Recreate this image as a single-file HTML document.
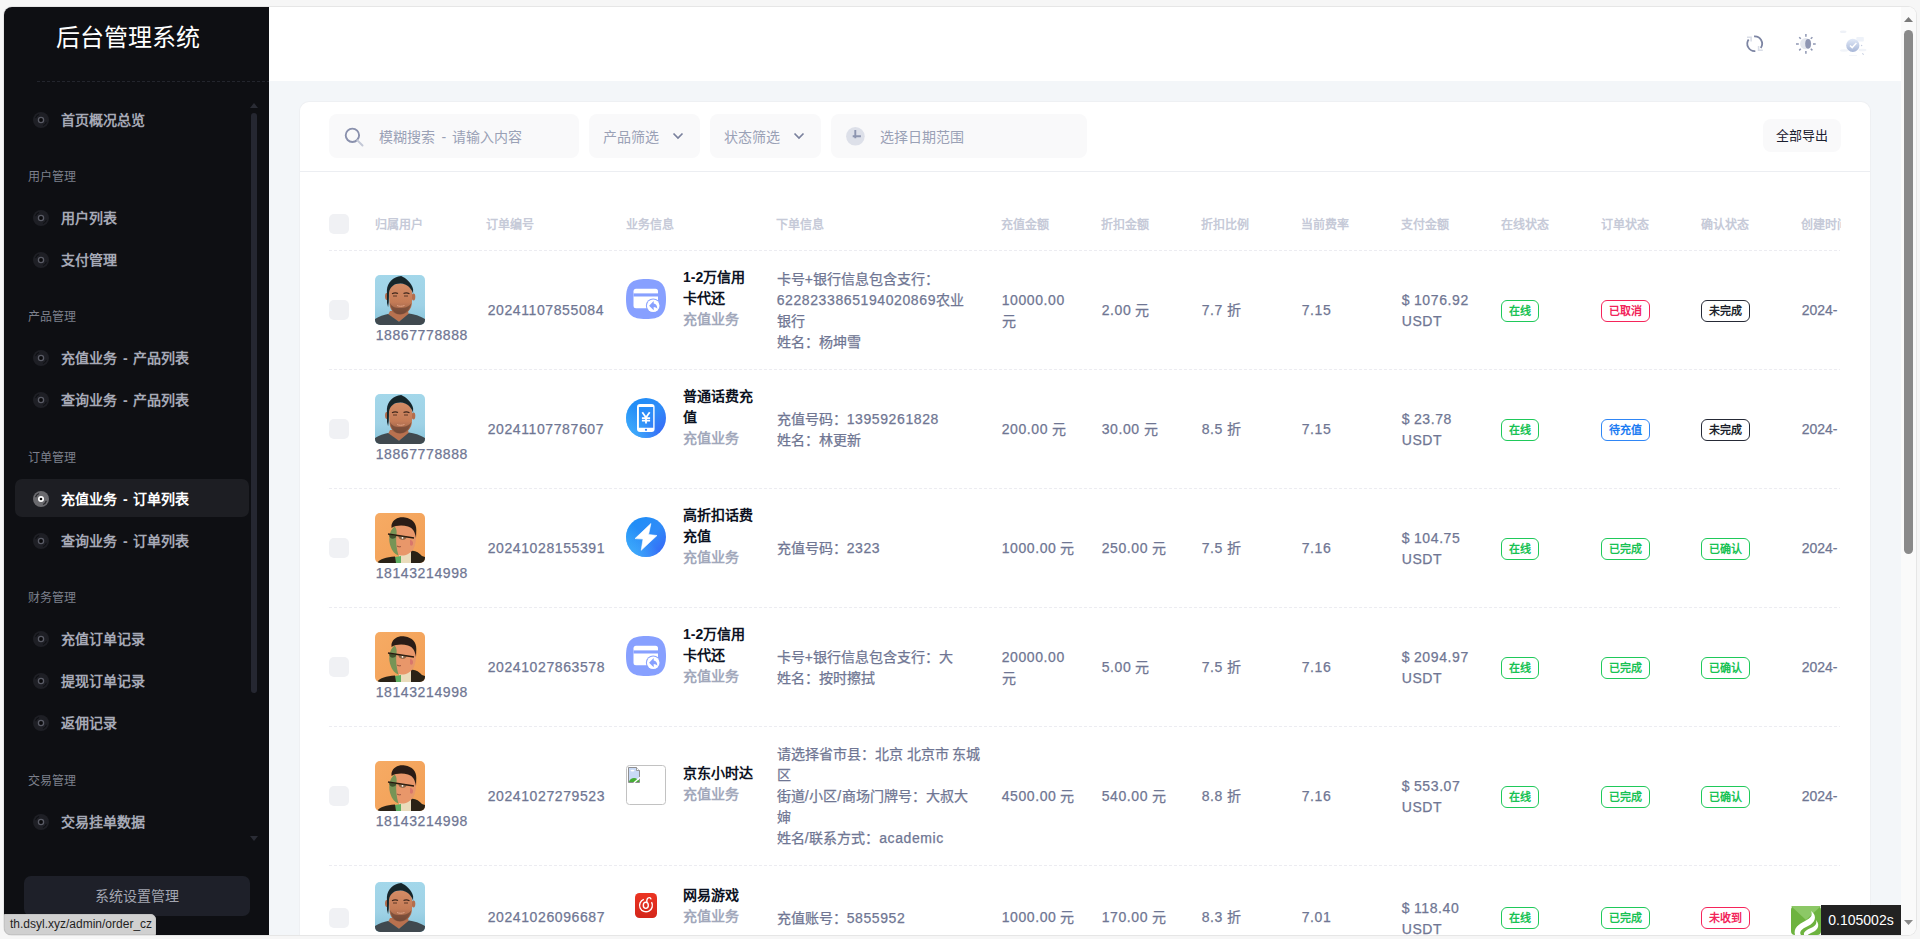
<!DOCTYPE html><html lang="zh-CN"><head><meta charset="utf-8"><title>后台管理系统</title><style>
*{box-sizing:border-box;margin:0;padding:0}
html,body{width:1920px;height:939px;overflow:hidden;background:#f6f6f6;font-family:"Liberation Sans",sans-serif}
.win{position:absolute;left:4px;top:7px;width:1912px;height:928px;border-radius:8px;overflow:hidden;background:#fff;box-shadow:0 0 0 1px #e6e6e6}
.in{position:absolute;left:-4px;top:-7px;width:1920px;height:939px}
.a{position:absolute;white-space:nowrap}
.side{position:absolute;left:4px;top:7px;width:265px;height:928px;background:#0e0f13}
.mi{position:absolute;left:61px;word-spacing:2px;font-size:14px;line-height:21px;font-weight:bold;color:#a6a9b6;white-space:nowrap}
.sec{position:absolute;left:28px;font-size:12px;line-height:20px;color:#7d808c;white-space:nowrap}
.ic{position:absolute;left:33px;width:16px;height:16px}
.hdr{position:absolute;left:269px;top:7px;width:1632px;height:74px;background:#fff}
.cnt{position:absolute;left:269px;top:81px;width:1632px;height:858px;background:#f3f6f9}
.card{position:absolute;left:300px;top:102px;width:1570px;height:900px;background:#fff;border-radius:9px;box-shadow:0 0 0 1px #eef0f3}
.inp{position:absolute;top:114px;height:44px;background:#f9f9fa;border-radius:8px}
.ph{position:absolute;word-spacing:2.5px;font-size:14px;line-height:21px;margin-top:1.5px;color:#9aa1b6;white-space:nowrap}
.th{position:absolute;top:213px;font-size:12px;line-height:20px;font-weight:bold;color:#c6cad8;white-space:nowrap}
.dash{position:absolute;left:329px;width:1511px;height:1px;background-image:linear-gradient(to right,#ececf1 60%,transparent 60%);background-size:5px 1px}
.t{position:absolute;font-size:14px;line-height:21px;color:#6f7693;white-space:nowrap;padding-left:0.7px;-webkit-text-stroke:0.25px #6f7693}
.n{letter-spacing:0.6px}
.tb{position:absolute;font-size:14px;line-height:21px;color:#0c1222;font-weight:bold;white-space:nowrap}
.ts{position:absolute;font-size:14px;line-height:21px;color:#a2a8bb;font-weight:bold;white-space:nowrap}
.cb{position:absolute;left:329px;width:20px;height:20px;border-radius:5px;background:#f0f1f4}
.bd{position:absolute;height:22px;border:1px solid;border-radius:6px;font-size:11px;line-height:20px;font-weight:bold;padding:0 7px;white-space:nowrap;background:#fff}
.g{color:#18c254;border-color:#1fc95a}
.r{color:#f2245a;border-color:#f5245a}
.k{color:#1b1f2b;border-color:#262a36}
.bl{color:#1d7cf2;border-color:#2f86f6}
</style></head><body>
<div class="win"><div class="in">
<div class="side"></div>
<div class="a" style="left:56px;top:23px;font-size:24px;line-height:30px;color:#fff">后台管理系统</div>
<div class="a" style="left:37px;top:81px;width:232px;height:1px;background-image:linear-gradient(to right,#23252d 60%,transparent 60%);background-size:5px 1px"></div>
<div class="a" style="left:15px;top:479px;width:234px;height:38px;border-radius:7px;background:#1d1e23"></div>
<svg class="ic" style="top:111.5px" viewBox="0 0 16 16"><circle cx="8" cy="8" r="8" fill="#1e1f25"/><path d="M2.6 6.2 A5.8 5.8 0 0 1 6 2.5" stroke="#0f1014" stroke-width="1.1" fill="none"/><path d="M13.4 9.8 A5.8 5.8 0 0 1 10 13.5" stroke="#0f1014" stroke-width="1.1" fill="none"/><circle cx="8" cy="8" r="2.6" stroke="#5a5c66" stroke-width="1.3" fill="#0b0b0e"/></svg>
<div class="mi" style="top:109.5px;color:#a6a9b6">首页概况总览</div>
<svg class="ic" style="top:209.5px" viewBox="0 0 16 16"><circle cx="8" cy="8" r="8" fill="#1e1f25"/><path d="M2.6 6.2 A5.8 5.8 0 0 1 6 2.5" stroke="#0f1014" stroke-width="1.1" fill="none"/><path d="M13.4 9.8 A5.8 5.8 0 0 1 10 13.5" stroke="#0f1014" stroke-width="1.1" fill="none"/><circle cx="8" cy="8" r="2.6" stroke="#5a5c66" stroke-width="1.3" fill="#0b0b0e"/></svg>
<div class="mi" style="top:207.5px;color:#a6a9b6">用户列表</div>
<svg class="ic" style="top:251.5px" viewBox="0 0 16 16"><circle cx="8" cy="8" r="8" fill="#1e1f25"/><path d="M2.6 6.2 A5.8 5.8 0 0 1 6 2.5" stroke="#0f1014" stroke-width="1.1" fill="none"/><path d="M13.4 9.8 A5.8 5.8 0 0 1 10 13.5" stroke="#0f1014" stroke-width="1.1" fill="none"/><circle cx="8" cy="8" r="2.6" stroke="#5a5c66" stroke-width="1.3" fill="#0b0b0e"/></svg>
<div class="mi" style="top:249.5px;color:#a6a9b6">支付管理</div>
<svg class="ic" style="top:349.5px" viewBox="0 0 16 16"><circle cx="8" cy="8" r="8" fill="#1e1f25"/><path d="M2.6 6.2 A5.8 5.8 0 0 1 6 2.5" stroke="#0f1014" stroke-width="1.1" fill="none"/><path d="M13.4 9.8 A5.8 5.8 0 0 1 10 13.5" stroke="#0f1014" stroke-width="1.1" fill="none"/><circle cx="8" cy="8" r="2.6" stroke="#5a5c66" stroke-width="1.3" fill="#0b0b0e"/></svg>
<div class="mi" style="top:347.5px;color:#a6a9b6">充值业务 - 产品列表</div>
<svg class="ic" style="top:391.5px" viewBox="0 0 16 16"><circle cx="8" cy="8" r="8" fill="#1e1f25"/><path d="M2.6 6.2 A5.8 5.8 0 0 1 6 2.5" stroke="#0f1014" stroke-width="1.1" fill="none"/><path d="M13.4 9.8 A5.8 5.8 0 0 1 10 13.5" stroke="#0f1014" stroke-width="1.1" fill="none"/><circle cx="8" cy="8" r="2.6" stroke="#5a5c66" stroke-width="1.3" fill="#0b0b0e"/></svg>
<div class="mi" style="top:389.5px;color:#a6a9b6">查询业务 - 产品列表</div>
<svg class="ic" style="top:490.5px" viewBox="0 0 16 16"><circle cx="8" cy="8" r="8" fill="#6a6a6e"/><path d="M2.6 6.2 A5.8 5.8 0 0 1 6 2.5" stroke="#2a2a2e" stroke-width="1.3" fill="none"/><path d="M13.4 9.8 A5.8 5.8 0 0 1 10 13.5" stroke="#2a2a2e" stroke-width="1.3" fill="none"/><circle cx="8" cy="8" r="3" fill="#fff"/><circle cx="8" cy="8" r="1.3" fill="#111"/></svg>
<div class="mi" style="top:488.5px;color:#ffffff">充值业务 - 订单列表</div>
<svg class="ic" style="top:532.5px" viewBox="0 0 16 16"><circle cx="8" cy="8" r="8" fill="#1e1f25"/><path d="M2.6 6.2 A5.8 5.8 0 0 1 6 2.5" stroke="#0f1014" stroke-width="1.1" fill="none"/><path d="M13.4 9.8 A5.8 5.8 0 0 1 10 13.5" stroke="#0f1014" stroke-width="1.1" fill="none"/><circle cx="8" cy="8" r="2.6" stroke="#5a5c66" stroke-width="1.3" fill="#0b0b0e"/></svg>
<div class="mi" style="top:530.5px;color:#a6a9b6">查询业务 - 订单列表</div>
<svg class="ic" style="top:630.5px" viewBox="0 0 16 16"><circle cx="8" cy="8" r="8" fill="#1e1f25"/><path d="M2.6 6.2 A5.8 5.8 0 0 1 6 2.5" stroke="#0f1014" stroke-width="1.1" fill="none"/><path d="M13.4 9.8 A5.8 5.8 0 0 1 10 13.5" stroke="#0f1014" stroke-width="1.1" fill="none"/><circle cx="8" cy="8" r="2.6" stroke="#5a5c66" stroke-width="1.3" fill="#0b0b0e"/></svg>
<div class="mi" style="top:628.5px;color:#a6a9b6">充值订单记录</div>
<svg class="ic" style="top:672.5px" viewBox="0 0 16 16"><circle cx="8" cy="8" r="8" fill="#1e1f25"/><path d="M2.6 6.2 A5.8 5.8 0 0 1 6 2.5" stroke="#0f1014" stroke-width="1.1" fill="none"/><path d="M13.4 9.8 A5.8 5.8 0 0 1 10 13.5" stroke="#0f1014" stroke-width="1.1" fill="none"/><circle cx="8" cy="8" r="2.6" stroke="#5a5c66" stroke-width="1.3" fill="#0b0b0e"/></svg>
<div class="mi" style="top:670.5px;color:#a6a9b6">提现订单记录</div>
<svg class="ic" style="top:714.5px" viewBox="0 0 16 16"><circle cx="8" cy="8" r="8" fill="#1e1f25"/><path d="M2.6 6.2 A5.8 5.8 0 0 1 6 2.5" stroke="#0f1014" stroke-width="1.1" fill="none"/><path d="M13.4 9.8 A5.8 5.8 0 0 1 10 13.5" stroke="#0f1014" stroke-width="1.1" fill="none"/><circle cx="8" cy="8" r="2.6" stroke="#5a5c66" stroke-width="1.3" fill="#0b0b0e"/></svg>
<div class="mi" style="top:712.5px;color:#a6a9b6">返佣记录</div>
<svg class="ic" style="top:813.5px" viewBox="0 0 16 16"><circle cx="8" cy="8" r="8" fill="#1e1f25"/><path d="M2.6 6.2 A5.8 5.8 0 0 1 6 2.5" stroke="#0f1014" stroke-width="1.1" fill="none"/><path d="M13.4 9.8 A5.8 5.8 0 0 1 10 13.5" stroke="#0f1014" stroke-width="1.1" fill="none"/><circle cx="8" cy="8" r="2.6" stroke="#5a5c66" stroke-width="1.3" fill="#0b0b0e"/></svg>
<div class="mi" style="top:811.5px;color:#a6a9b6">交易挂单数据</div>
<div class="sec" style="top:166.5px">用户管理</div>
<div class="sec" style="top:306.5px">产品管理</div>
<div class="sec" style="top:447.5px">订单管理</div>
<div class="sec" style="top:587.5px">财务管理</div>
<div class="sec" style="top:770.5px">交易管理</div>
<div class="a" style="left:251px;top:113px;width:6px;height:580px;border-radius:3px;background:#252731"></div>
<svg class="a" style="left:250px;top:103px" width="8" height="5" viewBox="0 0 8 5"><path d="M0 5 L4 0 L8 5Z" fill="#2a2c35"/></svg>
<svg class="a" style="left:250px;top:836px" width="8" height="5" viewBox="0 0 8 5"><path d="M0 0 L4 5 L8 0Z" fill="#2a2c35"/></svg>
<div class="a" style="left:24px;top:876px;width:226px;height:40px;border-radius:7px;background:#1e2029;color:#a3a6b1;font-size:14px;line-height:40px;text-align:center">系统设置管理</div>
<div class="hdr"></div>
<svg class="a" style="left:1742px;top:31px" width="26" height="26" viewBox="0 0 26 26"><path d="M12.05 5.33 A7.4 7.4 0 0 1 18.76 16.94" stroke="#7d85a3" stroke-width="1.8" fill="none"/><path d="M13.34 20.07 A7.4 7.4 0 0 1 6.64 8.46" stroke="#7d85a3" stroke-width="1.8" fill="none"/><path d="M16.6 15 V19.2 H20.8" stroke="#d9dde7" stroke-width="1.6" fill="none"/><path d="M5 6.2 H9.1 V10.5" stroke="#d9dde7" stroke-width="1.6" fill="none"/></svg>
<svg class="a" style="left:1793px;top:31px" width="26" height="26" viewBox="0 0 26 26"><circle cx="12.7" cy="12.7" r="5.6" fill="#e4e7ee"/><ellipse cx="15.1" cy="12.85" rx="2.9" ry="4.85" fill="#8e96b2"/><g stroke="#8e96b2" stroke-width="1.5" stroke-linecap="butt"><path d="M12.9 3V5.8"/><path d="M12.9 20V22.7"/><path d="M3 12.9H5.8"/><path d="M20 12.9H22.7"/><path d="M6.2 6.2L7.8 7.8"/><path d="M19.4 6.2L17.8 7.8"/><path d="M6.2 19.4L7.8 17.8"/><path d="M19.4 19.4L17.8 17.8"/></g></svg>
<svg class="a" style="left:1836px;top:28px" width="34" height="34" viewBox="0 0 34 34"><defs><linearGradient id="ag" x1="0" y1="0" x2="0" y2="1"><stop offset="0" stop-color="#e2eaf8"/><stop offset="1" stop-color="#a7b6d7"/></linearGradient></defs><ellipse cx="7.2" cy="3.8" rx="3.3" ry="1.3" fill="#eef1f7"/><rect x="20.3" y="9" width="7.5" height="4.5" rx="0.8" fill="#eef2f9"/><ellipse cx="8" cy="22.5" rx="4" ry="1.2" fill="#f1f4f9"/><ellipse cx="26.5" cy="22" rx="4" ry="1.3" fill="#f1f4f9"/><circle cx="25.6" cy="17.5" r="0.7" fill="#c5cde0"/><path d="M26.5 25 L27.5 27" stroke="#c9d1e2" stroke-width="1"/><rect x="13" y="27" width="8" height="0.8" fill="#f0f3f8"/><circle cx="16.8" cy="17.4" r="6.6" fill="url(#ag)"/><path d="M14 17.5 L16.2 19.6 L20.4 15.1" stroke="#fff" stroke-width="1.5" fill="none"/></svg>
<div class="cnt"></div>
<div class="card"></div>
<div class="inp" style="left:329px;width:250px"></div>
<svg class="a" style="left:344px;top:127px" width="21" height="21" viewBox="0 0 21 21"><circle cx="8.4" cy="8.3" r="6.7" stroke="#8a91ad" stroke-width="1.9" fill="none"/><path d="M13.4 13.4 L18.5 18.5" stroke="#c3c8d6" stroke-width="2" stroke-linecap="round"/></svg>
<div class="ph" style="left:379px;top:125px">模糊搜索 - 请输入内容</div>
<div class="inp" style="left:589px;width:111px"></div>
<div class="ph" style="left:603px;top:125px">产品筛选</div>
<svg class="a" style="left:672px;top:132px" width="12" height="8" viewBox="0 0 12 8"><path d="M1.5 1.5 L6 6 L10.5 1.5" stroke="#7a819d" stroke-width="1.7" fill="none"/></svg>
<div class="inp" style="left:710px;width:111px"></div>
<div class="ph" style="left:724px;top:125px">状态筛选</div>
<svg class="a" style="left:793px;top:132px" width="12" height="8" viewBox="0 0 12 8"><path d="M1.5 1.5 L6 6 L10.5 1.5" stroke="#7a819d" stroke-width="1.7" fill="none"/></svg>
<div class="inp" style="left:831px;width:256px"></div>
<svg class="a" style="left:846px;top:127px" width="19" height="19" viewBox="0 0 19 19"><circle cx="9.4" cy="9.3" r="9.3" fill="#dde0e9"/><path d="M9.3 3.1 V11.3 M6.7 9.3 H14.9" stroke="#8d95b0" stroke-width="1.9" fill="none"/></svg>
<div class="ph" style="left:880px;top:125px">选择日期范围</div>
<div class="a" style="left:1763px;top:119px;width:78px;height:33px;border-radius:8px;background:#f9f9fa;font-size:13px;line-height:33px;text-align:center;color:#1b2030">全部导出</div>
<div class="a" style="left:300px;top:171px;width:1570px;height:1px;background:#eceef2"></div>
<div class="cb" style="top:214px"></div>
<div class="a" style="left:300px;top:190px;width:1541px;height:700px;overflow:hidden">
<div class="th" style="left:75px;top:24.5px">归属用户</div>
<div class="th" style="left:186px;top:24.5px">订单编号</div>
<div class="th" style="left:326px;top:24.5px">业务信息</div>
<div class="th" style="left:476px;top:24.5px">下单信息</div>
<div class="th" style="left:701px;top:24.5px">充值金额</div>
<div class="th" style="left:801px;top:24.5px">折扣金额</div>
<div class="th" style="left:901px;top:24.5px">折扣比例</div>
<div class="th" style="left:1001px;top:24.5px">当前费率</div>
<div class="th" style="left:1101px;top:24.5px">支付金额</div>
<div class="th" style="left:1201px;top:24.5px">在线状态</div>
<div class="th" style="left:1301px;top:24.5px">订单状态</div>
<div class="th" style="left:1401px;top:24.5px">确认状态</div>
<div class="th" style="left:1501px;top:24.5px">创建时间</div>
</div>
<div class="dash" style="top:250px"></div>
<div class="dash" style="top:369px"></div>
<div class="dash" style="top:488px"></div>
<div class="dash" style="top:607px"></div>
<div class="dash" style="top:726px"></div>
<div class="dash" style="top:865px"></div>
<div class="cb" style="top:300.0px"></div>
<svg class="a" style="left:375px;top:275px" width="50" height="50" viewBox="0 0 50 50"><defs><linearGradient id="sa275" x1="0" y1="0" x2="0" y2="1"><stop offset="0" stop-color="#a3d7ea"/><stop offset="0.6" stop-color="#9fd2e6"/><stop offset="1" stop-color="#86c3d9"/></linearGradient><linearGradient id="fa275" x1="0" y1="0" x2="0" y2="1"><stop offset="0" stop-color="#d38c66"/><stop offset="0.6" stop-color="#c47b56"/><stop offset="1" stop-color="#8e5a44"/></linearGradient><clipPath id="ca275"><rect width="50" height="50" rx="5"/></clipPath><filter id="bl275"><feGaussianBlur stdDeviation="0.35"/></filter></defs><g clip-path="url(#ca275)"><rect width="50" height="50" fill="url(#sa275)"/><g filter="url(#bl275)"><path d="M15 36 L33 36 L34 40 L24 47 L13 40Z" fill="#b8714f"/><path d="M0 44 C4 41.5 9 39.5 13 39 L24 46.8 L34 38.5 C39 39 45 41 50 44 L50 50 L0 50Z" fill="#3f4a4f"/><ellipse cx="11.8" cy="21.5" rx="1.8" ry="3.4" fill="#b46e4e"/><ellipse cx="38.5" cy="22" rx="1.8" ry="3.4" fill="#b46e4e"/><path d="M13.8 18 C13.8 12 18.5 8.6 25.6 8.6 C32.5 8.6 37 12 37 18 L37 27 C37 34 32 39.5 25 39.5 C18 39.5 14.5 34 14.3 27Z" fill="url(#fa275)"/><path d="M15 28 C16 35 20 39.3 25 39.3 C30 39.3 35 35 36.5 28 C34 32 30 33 25 33 C20 33 17 32 15 28Z" fill="#5b3a2c" opacity="0.55"/><path d="M17 18.7 C19 17.8 21.5 17.8 23 18.6 M28.5 18.6 C30 17.8 32.5 17.8 34.5 18.8" stroke="#3e261c" stroke-width="1.1" fill="none"/><path d="M18 21 h4 M29 21 h4" stroke="#5a3526" stroke-width="1" fill="none"/><path d="M22 30.5 C24 31.5 27 31.5 29.5 30.5" stroke="#e0a285" stroke-width="1" fill="none"/><path d="M11.9 15 C12.5 7 18 2 26.2 0.9 C31 3 37 8 38.1 14.3 L38.1 19 C37 14 32 8.6 25.6 8.6 C19 8.6 15 12 14 17.5 L13.8 27 L13.1 32.2 L12 28Z" fill="#19262c"/></g></g></svg>
<div class="t" style="left:375px;top:325.0px"><span class="n">18867778888</span></div>
<div class="t" style="left:487px;top:299.5px"><span class="n">20241107855084</span></div>
<svg class="a" style="left:626px;top:279px" width="40" height="40" viewBox="0 0 40 40"><path d="M20 0 C34 0 40 4 40 20 C40 36 34 40 20 40 C6 40 0 36 0 20 C0 4 6 0 20 0Z" fill="#87a0ff"/><rect x="7.5" y="9.8" width="24.5" height="19.4" rx="2.5" fill="#fff"/><rect x="7.5" y="14.4" width="24.5" height="3.1" fill="#87a0ff"/><circle cx="27.2" cy="26.7" r="7.3" fill="#87a0ff"/><circle cx="27.2" cy="26.7" r="6.3" fill="#fff"/><path d="M23.1 26.7 L27.7 22.1 L27.7 24.6 C30 24.8 31.2 26.5 31.3 29.8 C30.4 28.6 29.3 28.2 27.7 28.1 L27.7 31.3Z" fill="#87a0ff"/></svg>
<div class="tb" style="left:683px;top:266.5px">1-2万信用</div>
<div class="tb" style="left:683px;top:287.5px">卡代还</div>
<div class="ts" style="left:683px;top:308.5px">充值业务</div>
<div class="t" style="left:776px;top:268.5px">卡号<span class="n">+</span>银行信息包含支行：</div><div class="t" style="left:776px;top:289.5px"><span class="n">6228233865194020869</span>农业</div><div class="t" style="left:776px;top:310.5px">银行</div><div class="t" style="left:776px;top:331.5px">姓名：杨坤雪</div>
<div class="t" style="left:1001px;top:289.5px"><span class="n">10000.00</span></div><div class="t" style="left:1001px;top:310.5px">元</div>
<div class="t" style="left:1101px;top:299.5px"><span class="n">2.00</span> 元</div>
<div class="t" style="left:1201px;top:299.5px"><span class="n">7.7</span> 折</div>
<div class="t" style="left:1301px;top:299.5px"><span class="n">7.15</span></div>
<div class="t" style="left:1401px;top:290.0px"><span class="n">$</span> <span class="n">1076.92</span></div><div class="t" style="left:1401px;top:311.0px"><span class="n">USDT</span></div>
<div class="bd g" style="left:1501px;top:299.5px">在线</div>
<div class="bd r" style="left:1601px;top:299.5px">已取消</div>
<div class="bd k" style="left:1701px;top:299.5px">未完成</div>
<div class="a" style="left:1801px;top:299.5px;width:40px;height:21px;overflow:hidden"><div class="t" style="left:0;top:0">2024-</div></div>
<div class="cb" style="top:419.0px"></div>
<svg class="a" style="left:375px;top:394px" width="50" height="50" viewBox="0 0 50 50"><defs><linearGradient id="sa394" x1="0" y1="0" x2="0" y2="1"><stop offset="0" stop-color="#a3d7ea"/><stop offset="0.6" stop-color="#9fd2e6"/><stop offset="1" stop-color="#86c3d9"/></linearGradient><linearGradient id="fa394" x1="0" y1="0" x2="0" y2="1"><stop offset="0" stop-color="#d38c66"/><stop offset="0.6" stop-color="#c47b56"/><stop offset="1" stop-color="#8e5a44"/></linearGradient><clipPath id="ca394"><rect width="50" height="50" rx="5"/></clipPath><filter id="bl394"><feGaussianBlur stdDeviation="0.35"/></filter></defs><g clip-path="url(#ca394)"><rect width="50" height="50" fill="url(#sa394)"/><g filter="url(#bl394)"><path d="M15 36 L33 36 L34 40 L24 47 L13 40Z" fill="#b8714f"/><path d="M0 44 C4 41.5 9 39.5 13 39 L24 46.8 L34 38.5 C39 39 45 41 50 44 L50 50 L0 50Z" fill="#3f4a4f"/><ellipse cx="11.8" cy="21.5" rx="1.8" ry="3.4" fill="#b46e4e"/><ellipse cx="38.5" cy="22" rx="1.8" ry="3.4" fill="#b46e4e"/><path d="M13.8 18 C13.8 12 18.5 8.6 25.6 8.6 C32.5 8.6 37 12 37 18 L37 27 C37 34 32 39.5 25 39.5 C18 39.5 14.5 34 14.3 27Z" fill="url(#fa394)"/><path d="M15 28 C16 35 20 39.3 25 39.3 C30 39.3 35 35 36.5 28 C34 32 30 33 25 33 C20 33 17 32 15 28Z" fill="#5b3a2c" opacity="0.55"/><path d="M17 18.7 C19 17.8 21.5 17.8 23 18.6 M28.5 18.6 C30 17.8 32.5 17.8 34.5 18.8" stroke="#3e261c" stroke-width="1.1" fill="none"/><path d="M18 21 h4 M29 21 h4" stroke="#5a3526" stroke-width="1" fill="none"/><path d="M22 30.5 C24 31.5 27 31.5 29.5 30.5" stroke="#e0a285" stroke-width="1" fill="none"/><path d="M11.9 15 C12.5 7 18 2 26.2 0.9 C31 3 37 8 38.1 14.3 L38.1 19 C37 14 32 8.6 25.6 8.6 C19 8.6 15 12 14 17.5 L13.8 27 L13.1 32.2 L12 28Z" fill="#19262c"/></g></g></svg>
<div class="t" style="left:375px;top:444.0px"><span class="n">18867778888</span></div>
<div class="t" style="left:487px;top:418.5px"><span class="n">20241107787607</span></div>
<svg class="a" style="left:626px;top:398px" width="40" height="40" viewBox="0 0 40 40"><defs><linearGradient id="ph398" x1="0" y1="0" x2="1" y2="1"><stop offset="0" stop-color="#1a8ef6"/><stop offset="0.55" stop-color="#2f8cf8"/><stop offset="1" stop-color="#3a5ff6"/></linearGradient><linearGradient id="ph398b" x1="0" y1="1" x2="1" y2="0"><stop offset="0" stop-color="#45b8fc" stop-opacity="0.9"/><stop offset="0.5" stop-color="#45b8fc" stop-opacity="0"/></linearGradient></defs><circle cx="20" cy="20" r="20" fill="url(#ph398)"/><circle cx="20" cy="20" r="20" fill="url(#ph398b)"/><path d="M14 6 H25.6 A3 3 0 0 1 28.6 9 V31 A3 3 0 0 1 25.6 34 H14 A3 3 0 0 1 11 31 V9 A3 3 0 0 1 14 6Z M12.9 9 V29.7 H27.2 V9Z" fill="#fff" fill-rule="evenodd"/><circle cx="20" cy="31.8" r="1.1" fill="#2f7ef7"/><path d="M16.3 14.2 L20 19.5 L23.7 14.2 M20 19.5 V25.6 M15.9 20.2 H24.1 M15.9 22.7 H24.1" stroke="#fff" stroke-width="1.8" fill="none"/></svg>
<div class="tb" style="left:683px;top:385.5px">普通话费充</div>
<div class="tb" style="left:683px;top:406.5px">值</div>
<div class="ts" style="left:683px;top:427.5px">充值业务</div>
<div class="t" style="left:776px;top:408.5px">充值号码：<span class="n">13959261828</span></div><div class="t" style="left:776px;top:429.5px">姓名：林更新</div>
<div class="t" style="left:1001px;top:418.5px"><span class="n">200.00</span> 元</div>
<div class="t" style="left:1101px;top:418.5px"><span class="n">30.00</span> 元</div>
<div class="t" style="left:1201px;top:418.5px"><span class="n">8.5</span> 折</div>
<div class="t" style="left:1301px;top:418.5px"><span class="n">7.15</span></div>
<div class="t" style="left:1401px;top:409.0px"><span class="n">$</span> <span class="n">23.78</span></div><div class="t" style="left:1401px;top:430.0px"><span class="n">USDT</span></div>
<div class="bd g" style="left:1501px;top:418.5px">在线</div>
<div class="bd bl" style="left:1601px;top:418.5px">待充值</div>
<div class="bd k" style="left:1701px;top:418.5px">未完成</div>
<div class="a" style="left:1801px;top:418.5px;width:40px;height:21px;overflow:hidden"><div class="t" style="left:0;top:0">2024-</div></div>
<div class="cb" style="top:538.0px"></div>
<svg class="a" style="left:375px;top:513px" width="50" height="50" viewBox="0 0 50 50"><defs><linearGradient id="sb513" x1="0" y1="0" x2="1" y2="1"><stop offset="0" stop-color="#f6ab64"/><stop offset="1" stop-color="#f29f56"/></linearGradient><clipPath id="cb513"><rect width="50" height="50" rx="5"/></clipPath><filter id="bb513"><feGaussianBlur stdDeviation="0.4"/></filter></defs><g clip-path="url(#cb513)"><rect width="50" height="50" fill="url(#sb513)"/><g filter="url(#bb513)"><path d="M24 40 L36 38 L37 50 L24 50Z" fill="#eadcbc"/><path d="M20 44 L26 43 L26 50 L20 50Z" fill="#5fae62"/><path d="M2 50 C5 46 11 44 20 43.5 L21 50Z" fill="#2a2316"/><path d="M36 38 C40 37 44 40 47 43 L50 44 L50 50 L36 50Z" fill="#2a2316"/><path d="M20 13 C27 10 37 11 40 17 C42 23 41 31 38.5 36 C35 41 30 43 26 42.5 C20 42 16 36 14.5 29 C13.8 22 16 16 20 13Z" fill="#e8976a"/><path d="M19.5 13.5 C15.5 17 13.8 22 14.5 29 C15.5 36 19 41 23.5 42.5 C21.5 36 20.5 28 21.5 22 C22 18 21.5 15.5 19.5 13.5Z" fill="#5a9353" opacity="0.8"/><path d="M35 27 C37 27 38.5 29 38 31 C37.5 33 36 33 35 32Z" fill="#d46f6a" opacity="0.8"/><path d="M16.5 12 C18 6 24 3.5 30 4.5 C37 5.5 41.5 10 41.3 17 L41 25 C40 19 38 15 33 13.5 C28 12 21 12 16.5 15Z" fill="#2b1d13"/><path d="M13 21 L39 25" stroke="#2a1a10" stroke-width="1.6"/><path d="M14 21.5 C14 26 19 27 21 24 L21 22.5Z" fill="#2f3b22" opacity="0.75"/><path d="M23.5 22.8 C23 27 30 28.5 31.5 24.5 L31.5 23.8Z" fill="#3a3a25" opacity="0.55"/><circle cx="27.5" cy="24.8" r="0.9" fill="#fff"/><path d="M22 33 C23.5 34 25 34 26 33.5" stroke="#8a4a36" stroke-width="0.9" fill="none"/></g></g></svg>
<div class="t" style="left:375px;top:563.0px"><span class="n">18143214998</span></div>
<div class="t" style="left:487px;top:537.5px"><span class="n">20241028155391</span></div>
<svg class="a" style="left:626px;top:517px" width="40" height="40" viewBox="0 0 40 40"><defs><linearGradient id="bo517" x1="0" y1="0" x2="1" y2="1"><stop offset="0" stop-color="#1a8ef6"/><stop offset="0.55" stop-color="#2f8cf8"/><stop offset="1" stop-color="#3a5ff6"/></linearGradient><linearGradient id="bo517b" x1="0" y1="1" x2="1" y2="0"><stop offset="0" stop-color="#45b8fc" stop-opacity="0.9"/><stop offset="0.5" stop-color="#45b8fc" stop-opacity="0"/></linearGradient></defs><circle cx="20" cy="20" r="20" fill="url(#bo517)"/><circle cx="20" cy="20" r="20" fill="url(#bo517b)"/><path d="M24.9 6.5 L9 21.6 L17 22.1 L15.2 33.3 L31 18.5 L22.6 17.5Z" fill="#fff" stroke="#fff" stroke-width="0.6" stroke-linejoin="round"/></svg>
<div class="tb" style="left:683px;top:504.5px">高折扣话费</div>
<div class="tb" style="left:683px;top:525.5px">充值</div>
<div class="ts" style="left:683px;top:546.5px">充值业务</div>
<div class="t" style="left:776px;top:538.0px">充值号码：<span class="n">2323</span></div>
<div class="t" style="left:1001px;top:537.5px"><span class="n">1000.00</span> 元</div>
<div class="t" style="left:1101px;top:537.5px"><span class="n">250.00</span> 元</div>
<div class="t" style="left:1201px;top:537.5px"><span class="n">7.5</span> 折</div>
<div class="t" style="left:1301px;top:537.5px"><span class="n">7.16</span></div>
<div class="t" style="left:1401px;top:528.0px"><span class="n">$</span> <span class="n">104.75</span></div><div class="t" style="left:1401px;top:549.0px"><span class="n">USDT</span></div>
<div class="bd g" style="left:1501px;top:537.5px">在线</div>
<div class="bd g" style="left:1601px;top:537.5px">已完成</div>
<div class="bd g" style="left:1701px;top:537.5px">已确认</div>
<div class="a" style="left:1801px;top:537.5px;width:40px;height:21px;overflow:hidden"><div class="t" style="left:0;top:0">2024-</div></div>
<div class="cb" style="top:657.0px"></div>
<svg class="a" style="left:375px;top:632px" width="50" height="50" viewBox="0 0 50 50"><defs><linearGradient id="sb632" x1="0" y1="0" x2="1" y2="1"><stop offset="0" stop-color="#f6ab64"/><stop offset="1" stop-color="#f29f56"/></linearGradient><clipPath id="cb632"><rect width="50" height="50" rx="5"/></clipPath><filter id="bb632"><feGaussianBlur stdDeviation="0.4"/></filter></defs><g clip-path="url(#cb632)"><rect width="50" height="50" fill="url(#sb632)"/><g filter="url(#bb632)"><path d="M24 40 L36 38 L37 50 L24 50Z" fill="#eadcbc"/><path d="M20 44 L26 43 L26 50 L20 50Z" fill="#5fae62"/><path d="M2 50 C5 46 11 44 20 43.5 L21 50Z" fill="#2a2316"/><path d="M36 38 C40 37 44 40 47 43 L50 44 L50 50 L36 50Z" fill="#2a2316"/><path d="M20 13 C27 10 37 11 40 17 C42 23 41 31 38.5 36 C35 41 30 43 26 42.5 C20 42 16 36 14.5 29 C13.8 22 16 16 20 13Z" fill="#e8976a"/><path d="M19.5 13.5 C15.5 17 13.8 22 14.5 29 C15.5 36 19 41 23.5 42.5 C21.5 36 20.5 28 21.5 22 C22 18 21.5 15.5 19.5 13.5Z" fill="#5a9353" opacity="0.8"/><path d="M35 27 C37 27 38.5 29 38 31 C37.5 33 36 33 35 32Z" fill="#d46f6a" opacity="0.8"/><path d="M16.5 12 C18 6 24 3.5 30 4.5 C37 5.5 41.5 10 41.3 17 L41 25 C40 19 38 15 33 13.5 C28 12 21 12 16.5 15Z" fill="#2b1d13"/><path d="M13 21 L39 25" stroke="#2a1a10" stroke-width="1.6"/><path d="M14 21.5 C14 26 19 27 21 24 L21 22.5Z" fill="#2f3b22" opacity="0.75"/><path d="M23.5 22.8 C23 27 30 28.5 31.5 24.5 L31.5 23.8Z" fill="#3a3a25" opacity="0.55"/><circle cx="27.5" cy="24.8" r="0.9" fill="#fff"/><path d="M22 33 C23.5 34 25 34 26 33.5" stroke="#8a4a36" stroke-width="0.9" fill="none"/></g></g></svg>
<div class="t" style="left:375px;top:682.0px"><span class="n">18143214998</span></div>
<div class="t" style="left:487px;top:656.5px"><span class="n">20241027863578</span></div>
<svg class="a" style="left:626px;top:636px" width="40" height="40" viewBox="0 0 40 40"><path d="M20 0 C34 0 40 4 40 20 C40 36 34 40 20 40 C6 40 0 36 0 20 C0 4 6 0 20 0Z" fill="#87a0ff"/><rect x="7.5" y="9.8" width="24.5" height="19.4" rx="2.5" fill="#fff"/><rect x="7.5" y="14.4" width="24.5" height="3.1" fill="#87a0ff"/><circle cx="27.2" cy="26.7" r="7.3" fill="#87a0ff"/><circle cx="27.2" cy="26.7" r="6.3" fill="#fff"/><path d="M23.1 26.7 L27.7 22.1 L27.7 24.6 C30 24.8 31.2 26.5 31.3 29.8 C30.4 28.6 29.3 28.2 27.7 28.1 L27.7 31.3Z" fill="#87a0ff"/></svg>
<div class="tb" style="left:683px;top:623.5px">1-2万信用</div>
<div class="tb" style="left:683px;top:644.5px">卡代还</div>
<div class="ts" style="left:683px;top:665.5px">充值业务</div>
<div class="t" style="left:776px;top:646.5px">卡号<span class="n">+</span>银行信息包含支行：大</div><div class="t" style="left:776px;top:667.5px">姓名：按时擦拭</div>
<div class="t" style="left:1001px;top:646.5px"><span class="n">20000.00</span></div><div class="t" style="left:1001px;top:667.5px">元</div>
<div class="t" style="left:1101px;top:656.5px"><span class="n">5.00</span> 元</div>
<div class="t" style="left:1201px;top:656.5px"><span class="n">7.5</span> 折</div>
<div class="t" style="left:1301px;top:656.5px"><span class="n">7.16</span></div>
<div class="t" style="left:1401px;top:647.0px"><span class="n">$</span> <span class="n">2094.97</span></div><div class="t" style="left:1401px;top:668.0px"><span class="n">USDT</span></div>
<div class="bd g" style="left:1501px;top:656.5px">在线</div>
<div class="bd g" style="left:1601px;top:656.5px">已完成</div>
<div class="bd g" style="left:1701px;top:656.5px">已确认</div>
<div class="a" style="left:1801px;top:656.5px;width:40px;height:21px;overflow:hidden"><div class="t" style="left:0;top:0">2024-</div></div>
<div class="cb" style="top:786.0px"></div>
<svg class="a" style="left:375px;top:761px" width="50" height="50" viewBox="0 0 50 50"><defs><linearGradient id="sb761" x1="0" y1="0" x2="1" y2="1"><stop offset="0" stop-color="#f6ab64"/><stop offset="1" stop-color="#f29f56"/></linearGradient><clipPath id="cb761"><rect width="50" height="50" rx="5"/></clipPath><filter id="bb761"><feGaussianBlur stdDeviation="0.4"/></filter></defs><g clip-path="url(#cb761)"><rect width="50" height="50" fill="url(#sb761)"/><g filter="url(#bb761)"><path d="M24 40 L36 38 L37 50 L24 50Z" fill="#eadcbc"/><path d="M20 44 L26 43 L26 50 L20 50Z" fill="#5fae62"/><path d="M2 50 C5 46 11 44 20 43.5 L21 50Z" fill="#2a2316"/><path d="M36 38 C40 37 44 40 47 43 L50 44 L50 50 L36 50Z" fill="#2a2316"/><path d="M20 13 C27 10 37 11 40 17 C42 23 41 31 38.5 36 C35 41 30 43 26 42.5 C20 42 16 36 14.5 29 C13.8 22 16 16 20 13Z" fill="#e8976a"/><path d="M19.5 13.5 C15.5 17 13.8 22 14.5 29 C15.5 36 19 41 23.5 42.5 C21.5 36 20.5 28 21.5 22 C22 18 21.5 15.5 19.5 13.5Z" fill="#5a9353" opacity="0.8"/><path d="M35 27 C37 27 38.5 29 38 31 C37.5 33 36 33 35 32Z" fill="#d46f6a" opacity="0.8"/><path d="M16.5 12 C18 6 24 3.5 30 4.5 C37 5.5 41.5 10 41.3 17 L41 25 C40 19 38 15 33 13.5 C28 12 21 12 16.5 15Z" fill="#2b1d13"/><path d="M13 21 L39 25" stroke="#2a1a10" stroke-width="1.6"/><path d="M14 21.5 C14 26 19 27 21 24 L21 22.5Z" fill="#2f3b22" opacity="0.75"/><path d="M23.5 22.8 C23 27 30 28.5 31.5 24.5 L31.5 23.8Z" fill="#3a3a25" opacity="0.55"/><circle cx="27.5" cy="24.8" r="0.9" fill="#fff"/><path d="M22 33 C23.5 34 25 34 26 33.5" stroke="#8a4a36" stroke-width="0.9" fill="none"/></g></g></svg>
<div class="t" style="left:375px;top:811.0px"><span class="n">18143214998</span></div>
<div class="t" style="left:487px;top:785.5px"><span class="n">20241027279523</span></div>
<svg class="a" style="left:626px;top:765px" width="40" height="40" viewBox="0 0 40 40"><rect x="0.5" y="0.5" width="39" height="39" rx="3" fill="#fff" stroke="#c2c2c2"/><path d="M2.5 2.5 H10.5 L13.5 5.5 V17.5 H2.5Z" fill="#c9daf6" stroke="#858585" stroke-width="0.9"/><path d="M10.5 2.5 V5.5 H13.5" fill="#fff" stroke="#858585" stroke-width="0.8"/><ellipse cx="6.5" cy="5.6" rx="2" ry="0.9" fill="#fff"/><path d="M2.9 17.1 C4 13 8.5 12 11.5 14.2 L13.1 15.5 V17.1Z" fill="#46ad35"/><path d="M7.8 18 L14.2 12.2" stroke="#fff" stroke-width="1.3"/></svg>
<div class="tb" style="left:683px;top:763.0px">京东小时达</div>
<div class="ts" style="left:683px;top:784.0px">充值业务</div>
<div class="t" style="left:776px;top:744.0px">请选择省市县：北京 北京市 东城</div><div class="t" style="left:776px;top:765.0px">区</div><div class="t" style="left:776px;top:786.0px">街道<span class="n">/</span>小区<span class="n">/</span>商场门牌号：大叔大</div><div class="t" style="left:776px;top:807.0px">婶</div><div class="t" style="left:776px;top:828.0px">姓名<span class="n">/</span>联系方式：<span class="n">academic</span></div>
<div class="t" style="left:1001px;top:785.5px"><span class="n">4500.00</span> 元</div>
<div class="t" style="left:1101px;top:785.5px"><span class="n">540.00</span> 元</div>
<div class="t" style="left:1201px;top:785.5px"><span class="n">8.8</span> 折</div>
<div class="t" style="left:1301px;top:785.5px"><span class="n">7.16</span></div>
<div class="t" style="left:1401px;top:776.0px"><span class="n">$</span> <span class="n">553.07</span></div><div class="t" style="left:1401px;top:797.0px"><span class="n">USDT</span></div>
<div class="bd g" style="left:1501px;top:785.5px">在线</div>
<div class="bd g" style="left:1601px;top:785.5px">已完成</div>
<div class="bd g" style="left:1701px;top:785.5px">已确认</div>
<div class="a" style="left:1801px;top:785.5px;width:40px;height:21px;overflow:hidden"><div class="t" style="left:0;top:0">2024-</div></div>
<div class="cb" style="top:907.5px"></div>
<svg class="a" style="left:375px;top:882px" width="50" height="50" viewBox="0 0 50 50"><defs><linearGradient id="sa882" x1="0" y1="0" x2="0" y2="1"><stop offset="0" stop-color="#a3d7ea"/><stop offset="0.6" stop-color="#9fd2e6"/><stop offset="1" stop-color="#86c3d9"/></linearGradient><linearGradient id="fa882" x1="0" y1="0" x2="0" y2="1"><stop offset="0" stop-color="#d38c66"/><stop offset="0.6" stop-color="#c47b56"/><stop offset="1" stop-color="#8e5a44"/></linearGradient><clipPath id="ca882"><rect width="50" height="50" rx="5"/></clipPath><filter id="bl882"><feGaussianBlur stdDeviation="0.35"/></filter></defs><g clip-path="url(#ca882)"><rect width="50" height="50" fill="url(#sa882)"/><g filter="url(#bl882)"><path d="M15 36 L33 36 L34 40 L24 47 L13 40Z" fill="#b8714f"/><path d="M0 44 C4 41.5 9 39.5 13 39 L24 46.8 L34 38.5 C39 39 45 41 50 44 L50 50 L0 50Z" fill="#3f4a4f"/><ellipse cx="11.8" cy="21.5" rx="1.8" ry="3.4" fill="#b46e4e"/><ellipse cx="38.5" cy="22" rx="1.8" ry="3.4" fill="#b46e4e"/><path d="M13.8 18 C13.8 12 18.5 8.6 25.6 8.6 C32.5 8.6 37 12 37 18 L37 27 C37 34 32 39.5 25 39.5 C18 39.5 14.5 34 14.3 27Z" fill="url(#fa882)"/><path d="M15 28 C16 35 20 39.3 25 39.3 C30 39.3 35 35 36.5 28 C34 32 30 33 25 33 C20 33 17 32 15 28Z" fill="#5b3a2c" opacity="0.55"/><path d="M17 18.7 C19 17.8 21.5 17.8 23 18.6 M28.5 18.6 C30 17.8 32.5 17.8 34.5 18.8" stroke="#3e261c" stroke-width="1.1" fill="none"/><path d="M18 21 h4 M29 21 h4" stroke="#5a3526" stroke-width="1" fill="none"/><path d="M22 30.5 C24 31.5 27 31.5 29.5 30.5" stroke="#e0a285" stroke-width="1" fill="none"/><path d="M11.9 15 C12.5 7 18 2 26.2 0.9 C31 3 37 8 38.1 14.3 L38.1 19 C37 14 32 8.6 25.6 8.6 C19 8.6 15 12 14 17.5 L13.8 27 L13.1 32.2 L12 28Z" fill="#19262c"/></g></g></svg>
<div class="t" style="left:375px;top:932.5px"><span class="n">18867778888</span></div>
<div class="t" style="left:487px;top:907.0px"><span class="n">20241026096687</span></div>
<svg class="a" style="left:635px;top:893px" width="22" height="25" viewBox="0 0 22 25"><defs><linearGradient id="ne893" x1="0" y1="0" x2="0" y2="1"><stop offset="0" stop-color="#ec3422"/><stop offset="1" stop-color="#d3271b"/></linearGradient></defs><rect width="22" height="25" rx="4.5" fill="url(#ne893)"/><path d="M8.81 6.39 A6.4 6.4 0 1 0 16.54 9.2" stroke="#fff" stroke-width="1.4" fill="none"/><ellipse cx="10.8" cy="12.3" rx="2.5" ry="3.1" stroke="#fff" stroke-width="1.4" fill="none"/><path d="M11.8 9.4 C11.6 6.8 12.4 4.8 14.2 4.6 C15.2 4.5 15.9 5.3 15.8 6.4" stroke="#fff" stroke-width="1.4" fill="none"/></svg>
<div class="tb" style="left:683px;top:884.5px">网易游戏</div>
<div class="ts" style="left:683px;top:905.5px">充值业务</div>
<div class="t" style="left:776px;top:907.5px">充值账号：<span class="n">5855952</span></div>
<div class="t" style="left:1001px;top:907.0px"><span class="n">1000.00</span> 元</div>
<div class="t" style="left:1101px;top:907.0px"><span class="n">170.00</span> 元</div>
<div class="t" style="left:1201px;top:907.0px"><span class="n">8.3</span> 折</div>
<div class="t" style="left:1301px;top:907.0px"><span class="n">7.01</span></div>
<div class="t" style="left:1401px;top:897.5px"><span class="n">$</span> <span class="n">118.40</span></div><div class="t" style="left:1401px;top:918.5px"><span class="n">USDT</span></div>
<div class="bd g" style="left:1501px;top:907.0px">在线</div>
<div class="bd g" style="left:1601px;top:907.0px">已完成</div>
<div class="bd r" style="left:1701px;top:907.0px">未收到</div>
<div class="a" style="left:1801px;top:907.0px;width:40px;height:21px;overflow:hidden"><div class="t" style="left:0;top:0">2024-</div></div>
<div class="a" style="left:1901px;top:7px;width:15px;height:928px;background:#fafafa"></div>
<div class="a" style="left:1904px;top:30px;width:9px;height:524px;border-radius:5px;background:#8a8a8a"></div>
<svg class="a" style="left:1904px;top:17px" width="9" height="5" viewBox="0 0 9 5"><path d="M0 5 L4.5 0 L9 5Z" fill="#7a7a7a"/></svg>
<svg class="a" style="left:1904px;top:920px" width="9" height="5" viewBox="0 0 9 5"><path d="M0 0 L4.5 5 L9 0Z" fill="#8a8a8a"/></svg>
<svg class="a" style="left:1791px;top:906px" width="30" height="29" viewBox="0 0 30 29"><rect width="30" height="29" rx="4" fill="#6db33f"/><path d="M0 0 L15 14 L30 0Z" fill="#8cc866"/><path d="M4 29 C2 22 8 18 14 15 C20 12 22 9 20 5 C27 10 24 17 17 20 C10 23 8 26 10 29Z" fill="#fff"/><path d="M13 29 C12 25 18 23 22 21 C25 19 26 17 25 14 C30 20 26 25 20 27 C18 28 17 28.5 17 29Z" fill="#fff"/></svg>
<div class="a" style="left:1821px;top:905px;width:80px;height:30px;background:#222;color:#fff;font-size:14px;line-height:30px;text-align:center">0.105002s</div>
</div></div>
<div class="a" style="left:4px;top:914px;width:152px;height:21px;background:#d0d0d0;border-top-right-radius:5px;border-bottom-left-radius:6px;border:1px solid #c4c4c4;font-size:12px;line-height:19px;color:#1f1f1f;padding-left:5px">th.dsyl.xyz/admin/order_cz</div>
</body></html>
